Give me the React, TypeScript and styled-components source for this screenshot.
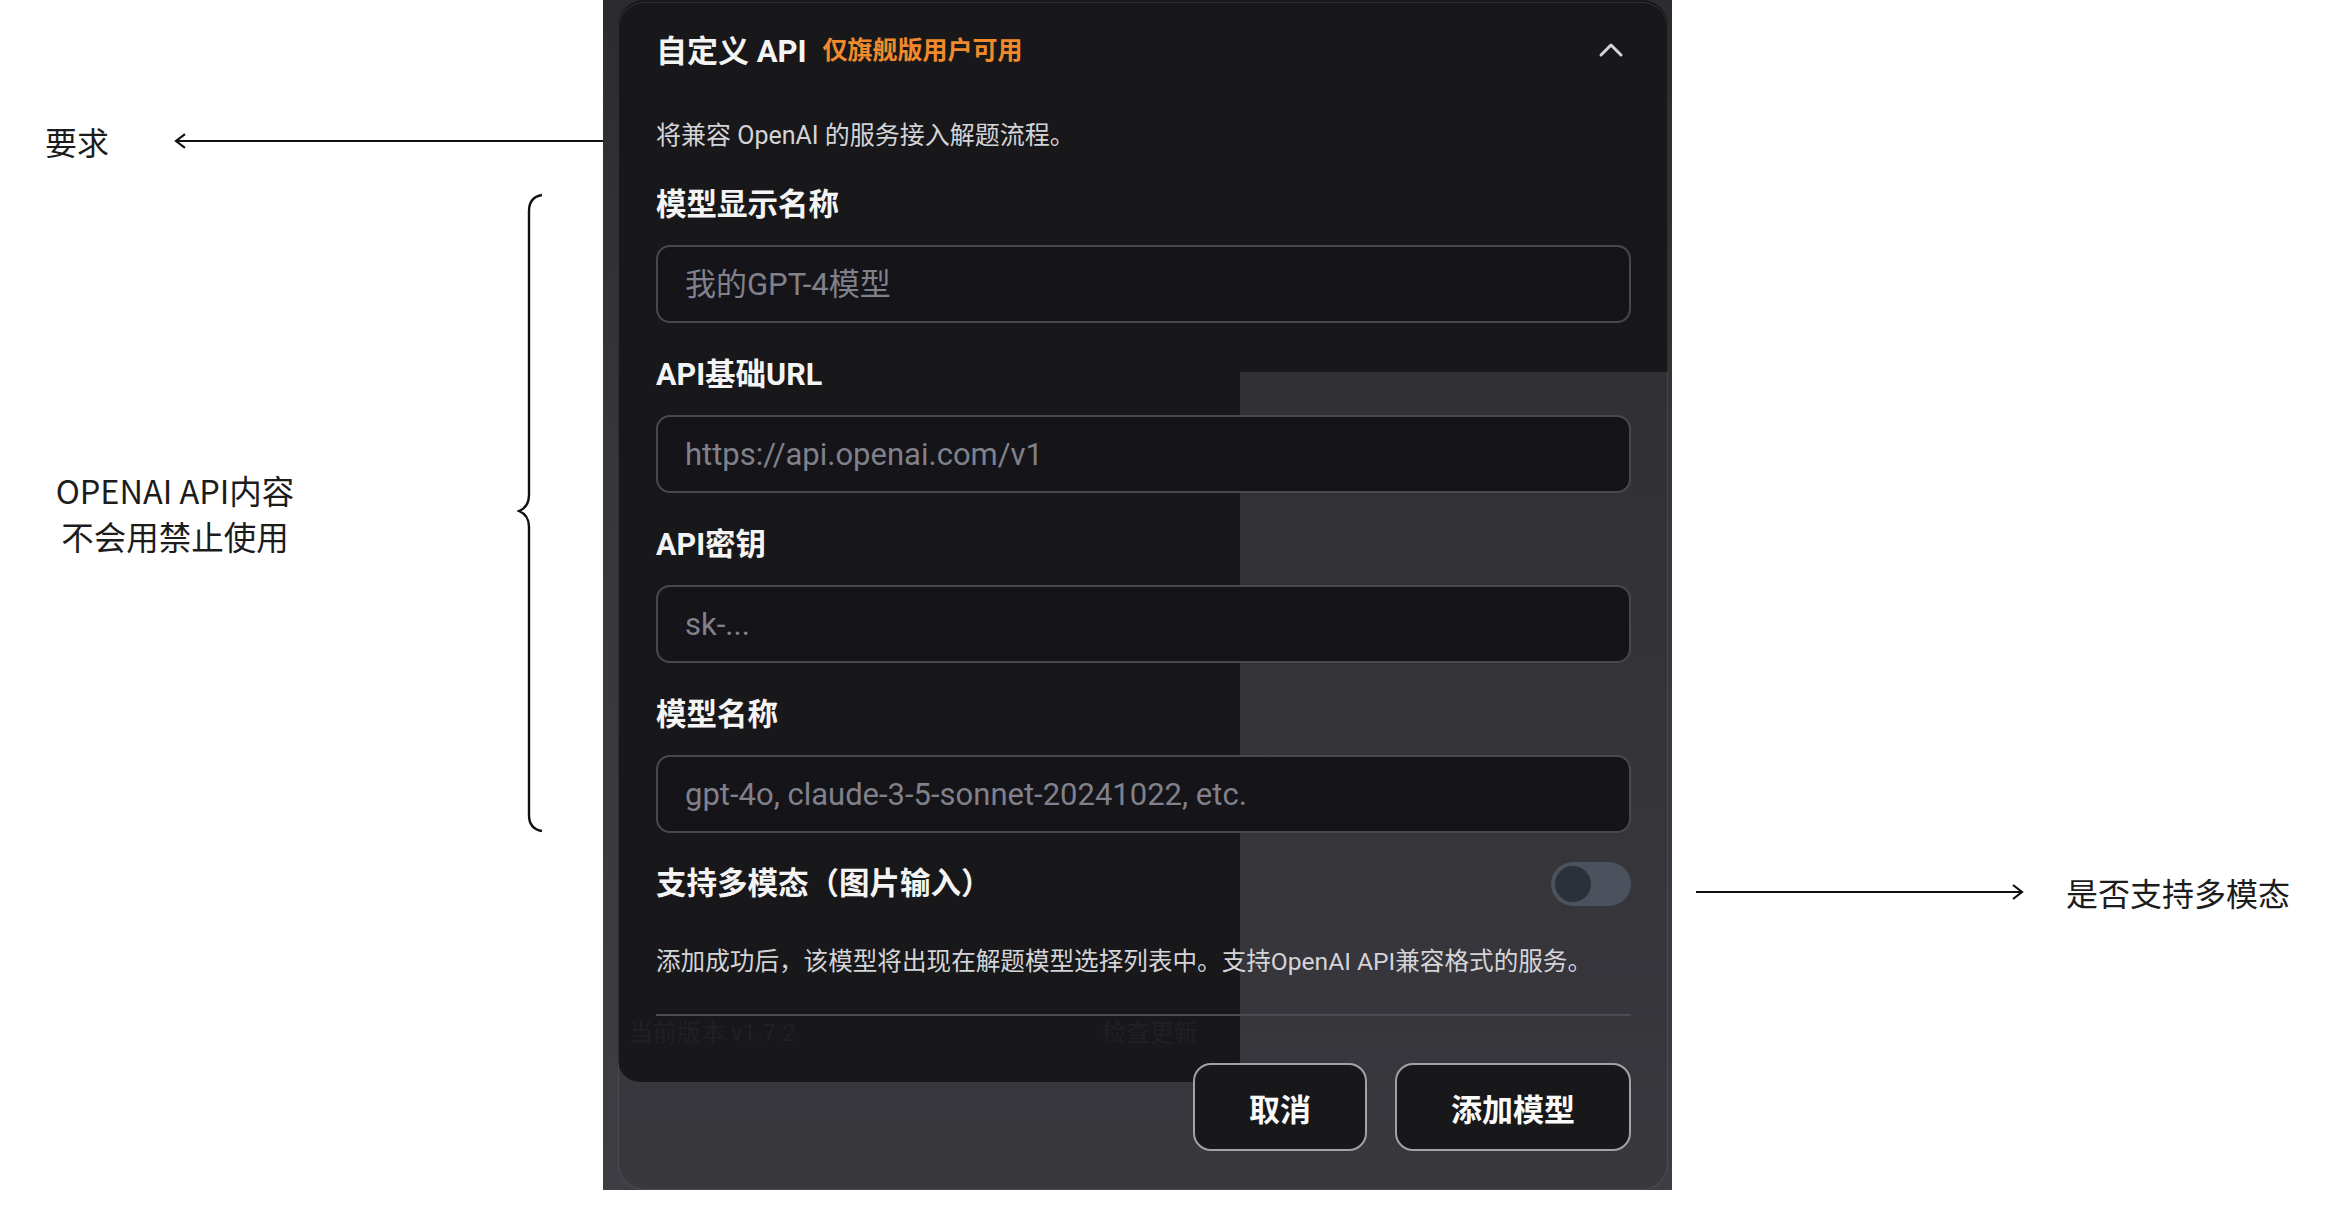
import React from 'react';
import styled, { createGlobalStyle } from 'styled-components';
import { ChevronUp } from 'lucide-react';

const uiFont = `Roboto, "Noto Sans CJK SC", sans-serif`;
const noteFont = `"Noto Sans CJK SC", sans-serif`;

const GlobalStyle = createGlobalStyle`
  html, body {
    margin: 0;
    padding: 0;
    background: #ffffff;
  }
  * {
    box-sizing: border-box;
  }
`;

const Page = styled.div`
  display: flex;
  align-items: flex-start;
  width: 2336px;
  height: 1231px;
  background: #ffffff;
  overflow: hidden;
`;

/* ---------- annotations ---------- */

const LeftNotes = styled.aside`
  width: 603px;
  flex-shrink: 0;
  display: flex;
  flex-direction: column;
  gap: 32px;
  padding-top: 121px;
`;

const NoteRow = styled.div`
  display: flex;
  align-items: center;
  height: 40px;
  padding-left: 45px;
  gap: 65px;
`;

const NoteText = styled.span`
  font: 400 32px/40px ${noteFont};
  color: #1c1c1c;
  white-space: nowrap;
`;

const BraceRow = styled.div`
  display: flex;
  align-items: center;
  justify-content: space-between;
  height: 640px;
  padding: 0 60px 0 52px;
`;

const BraceText = styled.p`
  margin: 0;
  width: 246px;
  text-align: center;
  font: 400 32.5px/46px ${noteFont};
  color: #1c1c1c;
`;

const RightNotes = styled.aside`
  display: flex;
  align-items: center;
  gap: 42px;
  height: 40px;
  margin-top: 872px;
  padding-left: 24px;
`;

/* ---------- frame and the page behind the dialog ---------- */

const Frame = styled.section`
  position: relative;
  width: 1069px;
  height: 1190px;
  flex-shrink: 0;
  padding: 0 4px 0 15px;
  background: linear-gradient(180deg, #2b2b30 0%, #36363b 40%, #3d3d43 100%);
`;

const GhostTop = styled.div`
  height: 372px;
  background: #18181b;
  border-radius: 26px 26px 0 0;
`;

const GhostSide = styled.div`
  width: 622px;
  height: 710px;
  display: flex;
  flex-direction: column;
  justify-content: flex-end;
  padding: 0 42px 31px 11px;
  background: #18181b;
  border-radius: 0 0 22px 22px;
`;

const GhostFooter = styled.div`
  display: flex;
  justify-content: space-between;
  font: 400 24px/36px ${uiFont};
  color: #222226;
`;

/* ---------- dialog ---------- */

const Dialog = styled.div`
  position: absolute;
  top: 2px;
  left: 15px;
  right: 4px;
  bottom: 0;
  display: flex;
  flex-direction: column;
  padding: 15px 36px 0 37px;
  border: 1px solid rgba(255, 255, 255, 0.1);
  border-radius: 26px;
  background: rgba(24, 24, 27, 0.12);
  font-family: ${uiFont};
`;

const TitleRow = styled.div`
  display: flex;
  align-items: center;
  justify-content: space-between;
  height: 60px;
`;

const TitleGroup = styled.div`
  display: flex;
  align-items: center;
  gap: 16px;
`;

const Title = styled.h2`
  margin: 0;
  font-size: 31px;
  font-weight: 700;
  color: #f4f4f5;
`;

const Badge = styled.span`
  font-size: 25px;
  font-weight: 700;
  color: #f08a2c;
`;

const CollapseButton = styled.button`
  display: flex;
  align-items: center;
  justify-content: center;
  width: 40px;
  height: 40px;
  margin-top: 3px;
  padding: 0;
  border: none;
  background: none;
  color: #d4d4d8;
`;

const Description = styled.p`
  margin: 40px 0 31px;
  font-size: 25px;
  line-height: 36px;
  color: #d4d4d8;
`;

const Field = styled.div`
  display: flex;
  flex-direction: column;
  gap: 20px;

  & + & {
    margin-top: 32px;
  }
`;

const Label = styled.label`
  font-size: 30.5px;
  line-height: 40px;
  font-weight: 700;
  color: #f4f4f5;
`;

const TextInput = styled.input`
  height: 78px;
  padding: 0 27px;
  border: 2px solid #48484f;
  border-radius: 14px;
  background: #151419;
  font-family: ${uiFont};
  font-size: 31px;
  color: #f4f4f5;
  outline: none;

  &::placeholder {
    color: #80818b;
  }
`;

const ToggleRow = styled.div`
  display: flex;
  align-items: center;
  justify-content: space-between;
  height: 48px;
  margin-top: 27px;
`;

const Toggle = styled.button<{ $on?: boolean }>`
  width: 80px;
  height: 44px;
  padding: 4px;
  border: none;
  border-radius: 22px;
  background: ${({ $on }) => ($on ? '#f08a2c' : '#4b525d')};
  display: flex;
  justify-content: ${({ $on }) => ($on ? 'flex-end' : 'flex-start')};

  &::after {
    content: '';
    width: 36px;
    height: 36px;
    border-radius: 50%;
    background: #2c3038;
  }
`;

const HelpText = styled.p`
  margin: 36px 0 0;
  font-size: 24.6px;
  line-height: 36px;
  color: #d4d4d8;
`;

const Divider = styled.hr`
  margin: 34px 0 0;
  height: 2px;
  border: none;
  background: #4c4c53;
`;

const Actions = styled.div`
  display: flex;
  justify-content: flex-end;
  gap: 28px;
  margin-top: 47px;
`;

const ActionButton = styled.button`
  height: 88px;
  padding: 0 54px;
  border: 2px solid #a1a1aa;
  border-radius: 18px;
  background: #18181b;
  font-family: ${uiFont};
  font-size: 31px;
  font-weight: 700;
  color: #fafafa;
`;

function LeftArrow() {
  return (
    <svg width="430" height="20" viewBox="0 0 430 20">
      <line x1="2" y1="10" x2="430" y2="10" stroke="#111" strokeWidth="2.2" />
      <polyline points="11,3 2,10 11,17" fill="none" stroke="#111" strokeWidth="2.2" />
    </svg>
  );
}

function RightArrow() {
  return (
    <svg width="328" height="20" viewBox="0 0 328 20">
      <line x1="0" y1="10" x2="326" y2="10" stroke="#111" strokeWidth="2.2" />
      <polyline points="317,3 326,10 317,17" fill="none" stroke="#111" strokeWidth="2.2" />
    </svg>
  );
}

function Brace() {
  return (
    <svg width="26" height="640" viewBox="0 0 26 640">
      <path
        d="M25 2 Q12 4 12 18 L12 302 Q12 314 2 318 Q12 322 12 334 L12 622 Q12 636 25 638"
        fill="none"
        stroke="#111"
        strokeWidth="2.4"
      />
    </svg>
  );
}

const fields = [
  { label: '模型显示名称', placeholder: '我的GPT-4模型' },
  { label: 'API基础URL', placeholder: 'https://api.openai.com/v1' },
  { label: 'API密钥', placeholder: 'sk-...' },
  { label: '模型名称', placeholder: 'gpt-4o, claude-3-5-sonnet-20241022, etc.' },
];

export default function App() {
  return (
    <>
      <GlobalStyle />
      <Page>
        <LeftNotes>
          <NoteRow>
            <NoteText>要求</NoteText>
            <LeftArrow />
          </NoteRow>
          <BraceRow>
            <BraceText>
              OPENAI API内容
              <br />
              不会用禁止使用
            </BraceText>
            <Brace />
          </BraceRow>
        </LeftNotes>

        <Frame>
          <GhostTop />
          <GhostSide>
            <GhostFooter>
              <span>当前版本 v1.7.2</span>
              <span>检查更新</span>
            </GhostFooter>
          </GhostSide>

          <Dialog>
            <TitleRow>
              <TitleGroup>
                <Title>自定义 API</Title>
                <Badge>仅旗舰版用户可用</Badge>
              </TitleGroup>
              <CollapseButton aria-label="收起">
                <ChevronUp size={40} strokeWidth={1.8} />
              </CollapseButton>
            </TitleRow>

            <Description>将兼容 OpenAI 的服务接入解题流程。</Description>

            {fields.map((f) => (
              <Field key={f.label}>
                <Label>{f.label}</Label>
                <TextInput placeholder={f.placeholder} />
              </Field>
            ))}

            <ToggleRow>
              <Label>支持多模态（图片输入）</Label>
              <Toggle aria-label="支持多模态" />
            </ToggleRow>

            <HelpText>
              添加成功后，该模型将出现在解题模型选择列表中。支持OpenAI API兼容格式的服务。
            </HelpText>

            <Divider />

            <Actions>
              <ActionButton>取消</ActionButton>
              <ActionButton>添加模型</ActionButton>
            </Actions>
          </Dialog>
        </Frame>

        <RightNotes>
          <RightArrow />
          <NoteText>是否支持多模态</NoteText>
        </RightNotes>
      </Page>
    </>
  );
}
